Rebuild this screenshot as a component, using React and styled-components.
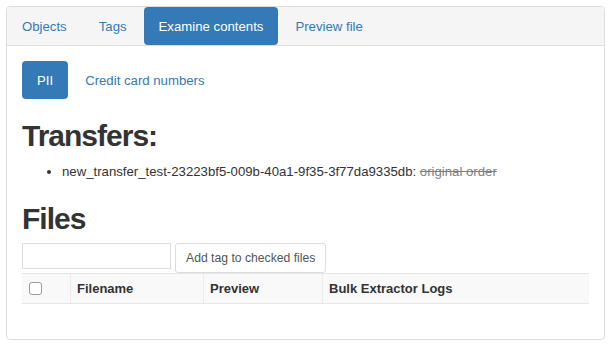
import React from "react";
import styled, { createGlobalStyle } from "styled-components";

const GlobalStyle = createGlobalStyle`
  * { box-sizing: border-box; }
  html, body { margin: 0; padding: 0; background: #fff; }
  body {
    font-family: "Liberation Sans", Arial, sans-serif;
    font-size: 13.2px;
    line-height: 20px;
    color: #333;
  }
`;

const Page = styled.div`
  padding: 6px;
`;

const Panel = styled.div`
  border: 1px solid #ddd;
  border-radius: 4px;
  background: #fff;
`;

const PanelHeader = styled.div`
  background: #f5f5f5;
  border-bottom: 1px solid #ddd;
  border-radius: 3px 3px 0 0;
`;

const Pills = styled.ul`
  display: flex;
  gap: 2px;
  margin: 0;
  padding: 0;
  list-style: none;
`;

const Pill = styled.li`
  a {
    display: block;
    height: 38px;
    padding: 10px 15px 8px;
    line-height: 20px;
    border-radius: 4px;
    text-decoration: none;
    color: ${(p) => (p.$active ? "#fff" : "#337ab7")};
    background: ${(p) => (p.$active ? "#337ab7" : "transparent")};
  }
`;

const PanelBody = styled.div`
  padding: 15px;
`;

const Heading = styled.h2`
  font-size: 30px;
  font-weight: 700;
  letter-spacing: -1px;
  line-height: 33px;
  margin: 20px 0 ${(p) => (p.$tight ? "8px" : "10px")};
  color: #333;
`;

const List = styled.ul`
  margin: 0 0 10px;
  padding-left: 40px;
  list-style: disc;
`;

const Struck = styled.del`
  color: #808080;
`;

const TagBar = styled.div`
  display: flex;
  align-items: flex-start;
  gap: 4px;
`;

const TagInput = styled.input`
  width: 149px;
  height: 26px;
  border: 1px solid #ddd;
  border-radius: 0;
  padding: 2px 4px;
  font: inherit;
  margin: 0;
`;

const SmallButton = styled.button`
  height: 30px;
  padding: 5px 10px;
  font-family: "Liberation Sans", Arial, sans-serif;
  font-size: 12.2px;
  line-height: 18px;
  color: #555;
  background: #fff;
  border: 1px solid #ddd;
  border-radius: 3px;
  margin: 0;
`;

const Table = styled.table`
  width: 100%;
  border-collapse: collapse;
  margin: 0 0 20px;
`;

const Th = styled.th`
  text-align: left;
  font-weight: 700;
  font-size: 13px;
  padding: 4px 6px;
  line-height: 20px;
  height: 30px;
  background: #f9f9f9;
  border-top: 1px solid #e6e6e6;
  border-bottom: 1px solid #e6e6e6;
  border-left: ${(p) => (p.$first ? "1px solid #f9f9f9" : "1px solid #ececec")};
  width: ${(p) => p.$w || "auto"};
`;

const Check = styled.span`
  display: block;
  width: 13px;
  height: 13px;
  border: 1px solid #999;
  border-radius: 3px;
  background: #fff;
`;

export default function App() {
  return (
    <>
      <GlobalStyle />
      <Page>
        <Panel>
          <PanelHeader>
            <Pills>
              <Pill><a href="#">Objects</a></Pill>
              <Pill><a href="#">Tags</a></Pill>
              <Pill $active><a href="#">Examine contents</a></Pill>
              <Pill><a href="#">Preview file</a></Pill>
            </Pills>
          </PanelHeader>
          <PanelBody>
            <Pills>
              <Pill $active><a href="#">PII</a></Pill>
              <Pill><a href="#">Credit card numbers</a></Pill>
            </Pills>
            <Heading>Transfers:</Heading>
            <List>
              <li>
                new_transfer_test-23223bf5-009b-40a1-9f35-3f77da9335db:{" "}
                <Struck>original order</Struck>
              </li>
            </List>
            <Heading $tight>Files</Heading>
            <TagBar>
              <TagInput type="text" />
              <SmallButton>Add tag to checked files</SmallButton>
            </TagBar>
            <Table>
              <thead>
                <tr>
                  <Th $first $w="48px"><Check /></Th>
                  <Th $w="133px">Filename</Th>
                  <Th $w="119px">Preview</Th>
                  <Th>Bulk Extractor Logs</Th>
                </tr>
              </thead>
            </Table>
          </PanelBody>
        </Panel>
      </Page>
    </>
  );
}
